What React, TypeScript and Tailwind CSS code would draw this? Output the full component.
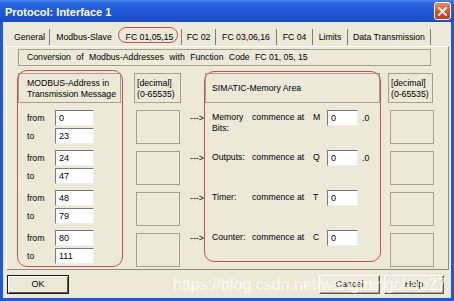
const tabs = [
  { label: 'General', w: 'w-[40px]', sep: true },
  { label: 'Modbus-Slave', w: 'w-[68px]', sep: false },
  { label: 'FC 01,05,15', w: 'w-[64px]', sep: true, active: true },
  { label: 'FC 02', w: 'w-[34px]', sep: true },
  { label: 'FC 03,06,16', w: 'w-[61px]', sep: true },
  { label: 'FC 04', w: 'w-[36px]', sep: true },
  { label: 'Limits', w: 'w-[35px]', sep: true },
  { label: 'Data Transmission', w: 'w-[83px]', sep: true },
]

const ranges = [
  ['0', '23'],
  ['24', '47'],
  ['48', '79'],
  ['80', '111'],
]

const areas = [
  { label: ['Memory', 'Bits:'], letter: 'M', bit: true },
  { label: ['Outputs:'], letter: 'Q', bit: true },
  { label: ['Timer:'], letter: 'T', bit: false },
  { label: ['Counter:'], letter: 'C', bit: false },
]

const Field = ({ value, w }: { value: string; w: string }) => (
  <div className={`h-[16px] ${w} bg-white border border-t-[#7b7b7b] border-l-[#7b7b7b] border-r-[#ededed] border-b-[#ededed] pl-[3px] text-[9px] leading-[14px]`}>
    {value}
  </div>
)

const HeaderBox = ({ children, extras }: { children: React.ReactNode; extras: string }) => (
  <div className={`h-[30px] border border-[#a3a190] flex flex-col justify-center pt-[1px] ${extras}`}>{children}</div>
)

const EmptyBox = () => (
  <div className="h-[40px]">
    <div className="mt-[1px] ml-[2px] w-[44px] h-[34px] border border-[#a3a190]" />
  </div>
)

function TitleBar() {
  return (
    <div className="h-[22px] flex items-center justify-between pl-[5px] pr-[3px] bg-[linear-gradient(to_bottom,#4a8cf0_0%,#2866df_14%,#2058d5_55%,#1b4cc2_100%)]">
      <span className="text-white font-bold text-[11px] leading-[14px] pt-[1px]">Protocol: Interface 1</span>
      <div className="w-[17px] h-[18px] rounded-[3px] border border-white bg-[linear-gradient(to_bottom,#ec8a63,#d84d26_60%,#c23a16)] flex items-center justify-center">
        <svg width="9" height="9" viewBox="0 0 9 9">
          <path d="M1 1 L8 8 M8 1 L1 8" stroke="white" strokeWidth="1.8" strokeLinecap="round" />
        </svg>
      </div>
    </div>
  )
}

function Tabs() {
  return (
    <div className="mt-[5px] h-[19px] flex items-start pl-[7px]">
      {tabs.map((t) => (
        <div
          key={t.label}
          className={`relative h-[16px] mt-[2px] ${t.w} flex items-center justify-center ${t.sep ? 'border-r border-[#7d7d7d]' : ''}`}
        >
          {t.label}
          {t.active && (
            <div className="absolute left-0 top-[-2px] w-[60px] h-[16px] rounded-[8px] border-[1.5px] border-[#cc4f4f] pointer-events-none" />
          )}
        </div>
      ))}
    </div>
  )
}

function TabPage() {
  return (
    <div className="ml-[3px] w-[443px] h-[224px] border border-t-white border-l-white border-r-[#8f8d80] border-b-[#8f8d80]">
      <div className="ml-[11px] mt-[2px] w-[413px] h-[17px] border border-[#a3a190] pl-[8px] flex items-center whitespace-pre">
        <span className="[word-spacing:3px]">Conversion of Modbus-Addresses with Function Code </span>
        <span>FC 01, 05, 15</span>
      </div>

      <div className="ml-[11px] mt-[7px] flex items-start">
        {/* MODBUS column */}
        <div className="relative w-[103px]">
          <HeaderBox extras="pl-[8px]">
            <span>MODBUS-Address in</span>
            <span>Transmission Message</span>
          </HeaderBox>
          <div className="mt-[7px]">
            {ranges.map(([from, to]) => (
              <div key={from} className="h-[40px]">
                <div className="flex items-center h-[16px]">
                  <span className="ml-[9px] w-[28px]">from</span>
                  <Field value={from} w="w-[39px]" />
                </div>
                <div className="flex items-center h-[16px] mt-[2px]">
                  <span className="ml-[9px] w-[28px]">to</span>
                  <Field value={to} w="w-[39px]" />
                </div>
              </div>
            ))}
          </div>
          <div className="absolute left-[-1px] top-[-3px] w-[106px] h-[197px] rounded-[10px] border-[1.5px] border-[#cc4f4f] pointer-events-none" />
        </div>

        {/* decimal column */}
        <div className="ml-[13px] w-[47px]">
          <HeaderBox extras="pl-[2px]">
            <span>[decimal]</span>
            <span>(0-65535)</span>
          </HeaderBox>
          <div className="mt-[7px]">
            {ranges.map(([from]) => (
              <EmptyBox key={from} />
            ))}
          </div>
        </div>

        {/* arrows */}
        <div className="ml-[9px] w-[15px] pt-[37px]">
          {ranges.map(([from]) => (
            <div key={from} className="h-[40px]">
              <div className="h-[16px] flex items-center">---&gt;</div>
            </div>
          ))}
        </div>

        {/* SIMATIC column */}
        <div className="relative w-[175px]">
          <HeaderBox extras="pl-[6px]">
            <span>SIMATIC-Memory Area</span>
          </HeaderBox>
          <div className="mt-[7px]">
            {areas.map((a) => (
              <div key={a.letter} className="h-[40px] flex items-start">
                <div className="w-[47px] pl-[7px] pt-[2px] flex flex-col">
                  {a.label.map((l) => (
                    <span key={l}>{l}</span>
                  ))}
                </div>
                <span className="w-[61px] pt-[2px]">commence at</span>
                <span className="w-[14px] pt-[2px]">{a.letter}</span>
                <Field value="0" w="w-[31px]" />
                {a.bit && <span className="ml-[4px] pt-[3px]">.0</span>}
              </div>
            ))}
          </div>
          <div className="absolute left-[-1px] top-[-2px] w-[177px] h-[191px] rounded-[10px] border-[1.5px] border-[#cc4f4f] pointer-events-none" />
        </div>

        {/* right decimal column */}
        <div className="ml-[8px] w-[45px]">
          <HeaderBox extras="pl-[2px]">
            <span>[decimal]</span>
            <span>(0-65535)</span>
          </HeaderBox>
          <div className="mt-[7px]">
            {areas.map((a) => (
              <EmptyBox key={a.letter} />
            ))}
          </div>
        </div>
      </div>
    </div>
  )
}

function Buttons() {
  const plain = 'h-[19px] border border-t-white border-l-white border-r-[#5a5a5a] border-b-[#5a5a5a] shadow-[inset_-1px_-1px_0_#aca899] flex items-center justify-center text-[9px]'
  return (
    <div className="mt-[5px] h-[19px] flex items-center">
      <div className="ml-[4px] w-[62px] h-[19px] border border-[#1e1e1e] shadow-[inset_1px_1px_0_#fff,inset_-1px_-1px_0_#555] flex items-center justify-center text-[9px]">
        OK
      </div>
      <div className="flex-1" />
      <div className={`w-[61px] ${plain}`}>Cancel</div>
      <div className={`ml-[4px] mr-[7px] w-[60px] ${plain}`}>Help</div>
    </div>
  )
}

export default function App() {
  return (
    <div className="relative w-[454px] h-[301px] flex flex-col bg-[#ECE9D8] overflow-hidden font-[Liberation_Sans,Arial,sans-serif] text-[8.7px] leading-[11px] text-black">
      <TitleBar />
      <div className="flex-1 flex flex-col border-l-[3px] border-r-[3px] border-b-[3px] border-[#2358d3]">
        <Tabs />
        <TabPage />
        <Buttons />
      </div>
      {/* watermark */}
      <div className="absolute left-[173px] top-[276px] text-[16px] leading-[18px] text-white/75 pointer-events-none whitespace-nowrap">
        https://blog.csdn.net/wangmingchao27
      </div>
    </div>
  )
}
